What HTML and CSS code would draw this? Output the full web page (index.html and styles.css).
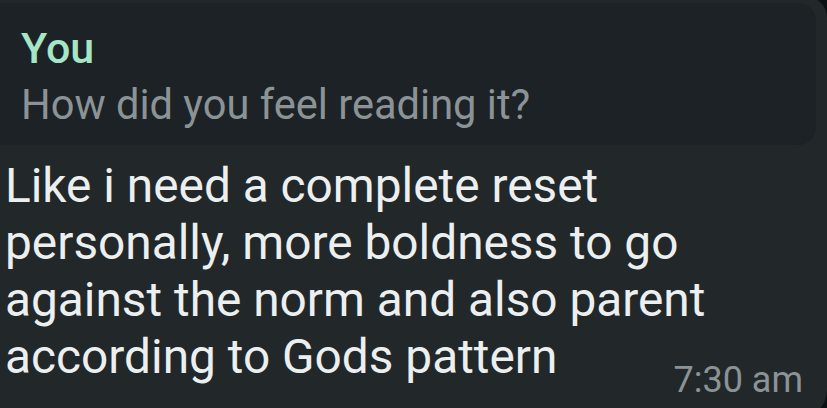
FILE: index.html
```html
<!DOCTYPE html>
<html lang="en">
<head>
    <meta charset="UTF-8">
    <meta name="viewport" content="width=device-width, initial-scale=1.0">
    <title>Chat reply</title>
    <link rel="stylesheet" href="styles.css">
</head>
<body>

    <div class="bubble">
        <div class="quote">
            <div class="quote-author">You</div>
            <div class="quote-text">How did you feel reading it?</div>
        </div>
        <p class="message">Like i need a complete reset personally, more boldness to go against the norm and also parent according to Gods pattern</p>
        <div class="meta">7:30 am</div>
    </div>

</body>
</html>
```

FILE: styles.css
```css
/* Base Styles */
:root {
    --color-page: #0b1115;
    --color-bubble: #22272a;
    --color-quote: #1c2225;
    --color-text: #eceff0;
    --color-muted: #8b9396;
    --color-author: #a6e5c6;
}

* {
    margin: 0;
    padding: 0;
    box-sizing: border-box;
}

html,
body {
    height: 100%;
}

body {
    font-family: Roboto, "Noto Sans", sans-serif;
    background-color: var(--color-page);
    color: var(--color-text);
    overflow: hidden;
}

/* Message bubble */
.bubble {
    width: 847px;
    height: 422px;
    margin: -4px 0 0 -20px;
    padding: 7px 11px 0 0;
    background-color: var(--color-bubble);
    border-radius: 0 22px 28px 0;
}

/* Quoted reply */
.quote {
    padding: 21px 20px 17px 41px;
    background-color: var(--color-quote);
    border-radius: 0 18px 18px 0;
}

.quote-author {
    font-size: 43px;
    line-height: 48px;
    font-weight: 500;
    color: var(--color-author);
}

.quote-text {
    margin-top: 10px;
    font-size: 41.6px;
    line-height: 46px;
    color: var(--color-muted);
}

/* Message body */
.message {
    margin-top: 13px;
    padding-left: 25px;
    padding-right: 90px;
    font-size: 47.8px;
    line-height: 57px;
}

.meta {
    margin-top: -26px;
    padding-right: 13px;
    text-align: right;
    font-size: 36px;
    line-height: 40px;
    color: var(--color-muted);
}
```
